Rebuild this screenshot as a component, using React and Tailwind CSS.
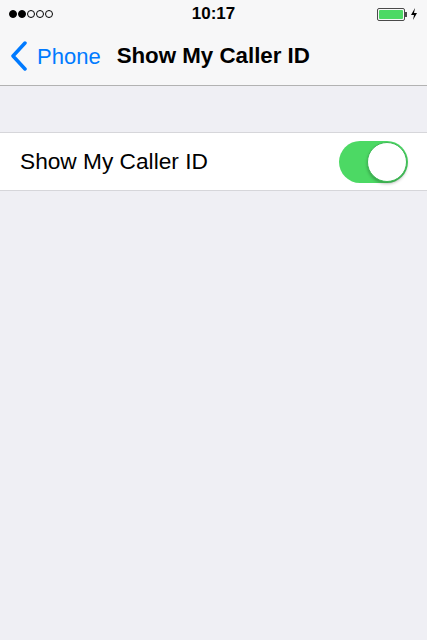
import React from 'react';

const font = { fontFamily: '"Liberation Sans", Arial, sans-serif' };

const StatusBar = () => (
  <div className="relative h-[28px] flex items-center px-[9px]">
    <div className="flex items-center gap-[1.5px]">
      {[true, true, false, false, false].map((on, i) => (
        <span
          key={i}
          className={`block w-[7.5px] h-[7.5px] rounded-full border border-black ${on ? 'bg-black' : 'bg-transparent'}`}
        />
      ))}
    </div>
    <div className="absolute left-0 right-0 top-[4px] text-center text-[17px] font-bold text-black leading-[20px]">10:17</div>
    <div className="ml-auto flex items-center gap-[3px] mr-0">
      <div className="flex items-center">
        <div className="w-[28px] h-[13px] border border-[#4a4a4a] rounded-[2px] p-[1px]">
          <div className="w-full h-full bg-[#4cd964] rounded-[1px]" />
        </div>
        <div className="w-[2px] h-[5px] bg-[#4a4a4a]" />
      </div>
      <svg width="8" height="12" viewBox="0 0 8 12">
        <path d="M5 0 L1 7 H4 L3 12 L7 5 H4 Z" fill="#000" />
      </svg>
    </div>
  </div>
);

const NavBar = () => (
  <div className="h-[58px] flex items-center border-b border-[#b2b2b2] bg-[#f7f7f8]">
    <svg width="18" height="30" viewBox="0 0 18 30" className="ml-[10px] mt-[-2px]">
      <path d="M15 2 L3 15 L15 28" fill="none" stroke="#007aff" strokeWidth="3.5" strokeLinecap="round" strokeLinejoin="round" />
    </svg>
    <span className="ml-[9px] text-[22px] text-[#007aff] leading-none">Phone</span>
    <span className="ml-[16px] text-[22.3px] font-bold text-black leading-none">Show My Caller ID</span>
  </div>
);

const Toggle = () => (
  <div className="relative w-[69px] h-[42px] rounded-full bg-[#4cd964]">
    <div className="absolute right-[1px] top-[1px] w-[40px] h-[40px] rounded-full bg-white shadow-[0_2px_3px_rgba(0,0,0,0.25)] border border-[#3cb954]" />
  </div>
);

export default function App() {
  return (
    <div className="w-[427px] h-[640px] bg-[#efeff4] overflow-hidden" style={font}>
      <div className="bg-[#f7f7f8]">
        <StatusBar />
        <NavBar />
      </div>
      <div className="mt-[46px] bg-white border-t border-b border-[#d6d6da] h-[59px] flex items-center pl-[20px] pr-[19px]">
        <span className="text-[22.7px] text-black">Show My Caller ID</span>
        <div className="ml-auto">
          <Toggle />
        </div>
      </div>
    </div>
  );
}
